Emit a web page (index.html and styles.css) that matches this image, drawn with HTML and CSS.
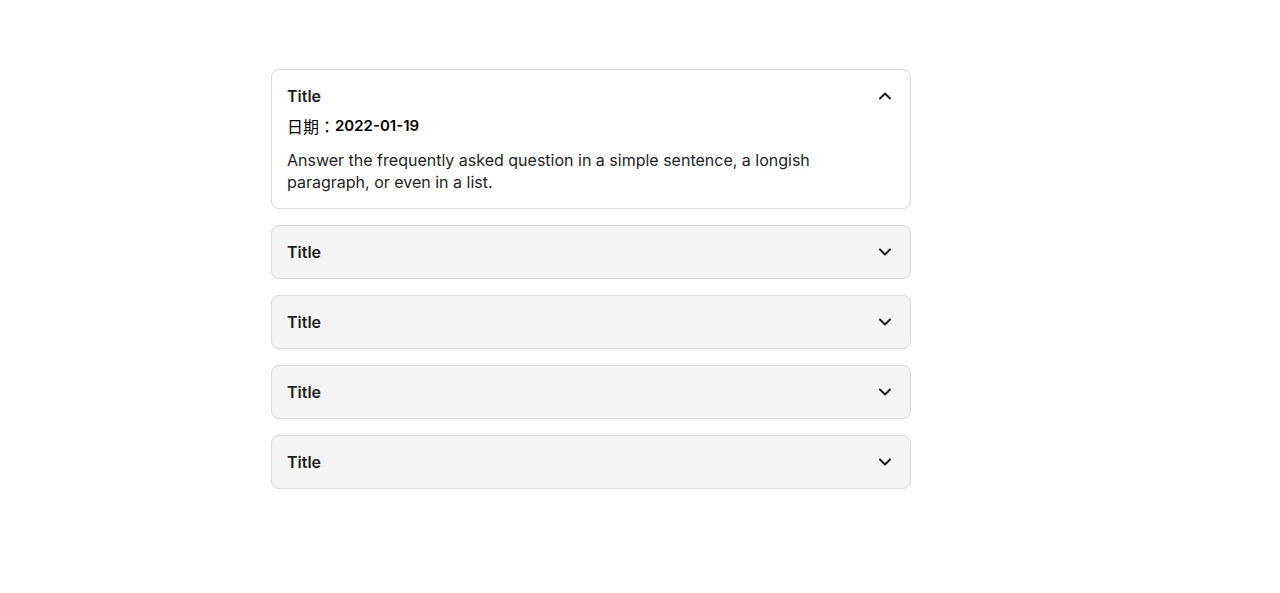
FILE: index.html
```html
<!DOCTYPE html>
<html lang="en">
<head>
<meta charset="utf-8">
<title>FAQ</title>
<link rel="stylesheet" href="styles.css">
</head>
<body>
<main class="faq">
  <section class="item open">
    <div class="head">
      <span class="title">Title</span>
      <svg class="chev" viewBox="0 0 20 20" width="20" height="20"><path d="M5 12.5l5-5 5 5" fill="none" stroke="currentColor" stroke-width="2" stroke-linecap="round" stroke-linejoin="round"/></svg>
    </div>
    <div class="date"><span class="date-label">日期：</span><span class="date-value">2022-01-19</span></div>
    <p class="answer">Answer the frequently asked question in a simple sentence, a longish paragraph, or even in a list.</p>
  </section>
  <section class="item">
    <div class="head">
      <span class="title">Title</span>
      <svg class="chev" viewBox="0 0 20 20" width="20" height="20"><path d="M5 7.5l5 5 5-5" fill="none" stroke="currentColor" stroke-width="2" stroke-linecap="round" stroke-linejoin="round"/></svg>
    </div>
  </section>
  <section class="item">
    <div class="head">
      <span class="title">Title</span>
      <svg class="chev" viewBox="0 0 20 20" width="20" height="20"><path d="M5 7.5l5 5 5-5" fill="none" stroke="currentColor" stroke-width="2" stroke-linecap="round" stroke-linejoin="round"/></svg>
    </div>
  </section>
  <section class="item">
    <div class="head">
      <span class="title">Title</span>
      <svg class="chev" viewBox="0 0 20 20" width="20" height="20"><path d="M5 7.5l5 5 5-5" fill="none" stroke="currentColor" stroke-width="2" stroke-linecap="round" stroke-linejoin="round"/></svg>
    </div>
  </section>
  <section class="item">
    <div class="head">
      <span class="title">Title</span>
      <svg class="chev" viewBox="0 0 20 20" width="20" height="20"><path d="M5 7.5l5 5 5-5" fill="none" stroke="currentColor" stroke-width="2" stroke-linecap="round" stroke-linejoin="round"/></svg>
    </div>
  </section>
</main>
</body>
</html>
```
FILE: styles.css
```css
html, body {
  margin: 0;
  padding: 0;
  background: #ffffff;
}
body {
  font-family: Inter, "Noto Sans CJK TC", sans-serif;
  color: #1e1e1e;
}
.faq {
  width: 640px;
  margin: 69px 0 0 271px;
  display: flex;
  flex-direction: column;
  gap: 16px;
}
.item {
  border: 1px solid #d9d9d9;
  border-radius: 8px;
  background: #f4f4f4;
  padding: 15px;
}
.item.open {
  background: #ffffff;
}
.head {
  display: flex;
  align-items: center;
  justify-content: space-between;
  height: 22px;
}
.title {
  font-size: 16px;
  font-weight: 600;
  line-height: 22px;
}
.chev {
  color: #1e1e1e;
  display: block;
}
.date {
  margin-top: 8px;
  height: 22px;
  display: flex;
  align-items: center;
  color: #000;
}
.date-label {
  font-family: "Noto Sans CJK TC", sans-serif;
  font-size: 16px;
  font-weight: 400;
  line-height: 22px;
}
.date-value {
  font-size: 15px;
  font-weight: 600;
  line-height: 22px;
}
.answer {
  margin: 12px 0 0;
  font-size: 16px;
  line-height: 22px;
  max-width: 540px;
}
```
